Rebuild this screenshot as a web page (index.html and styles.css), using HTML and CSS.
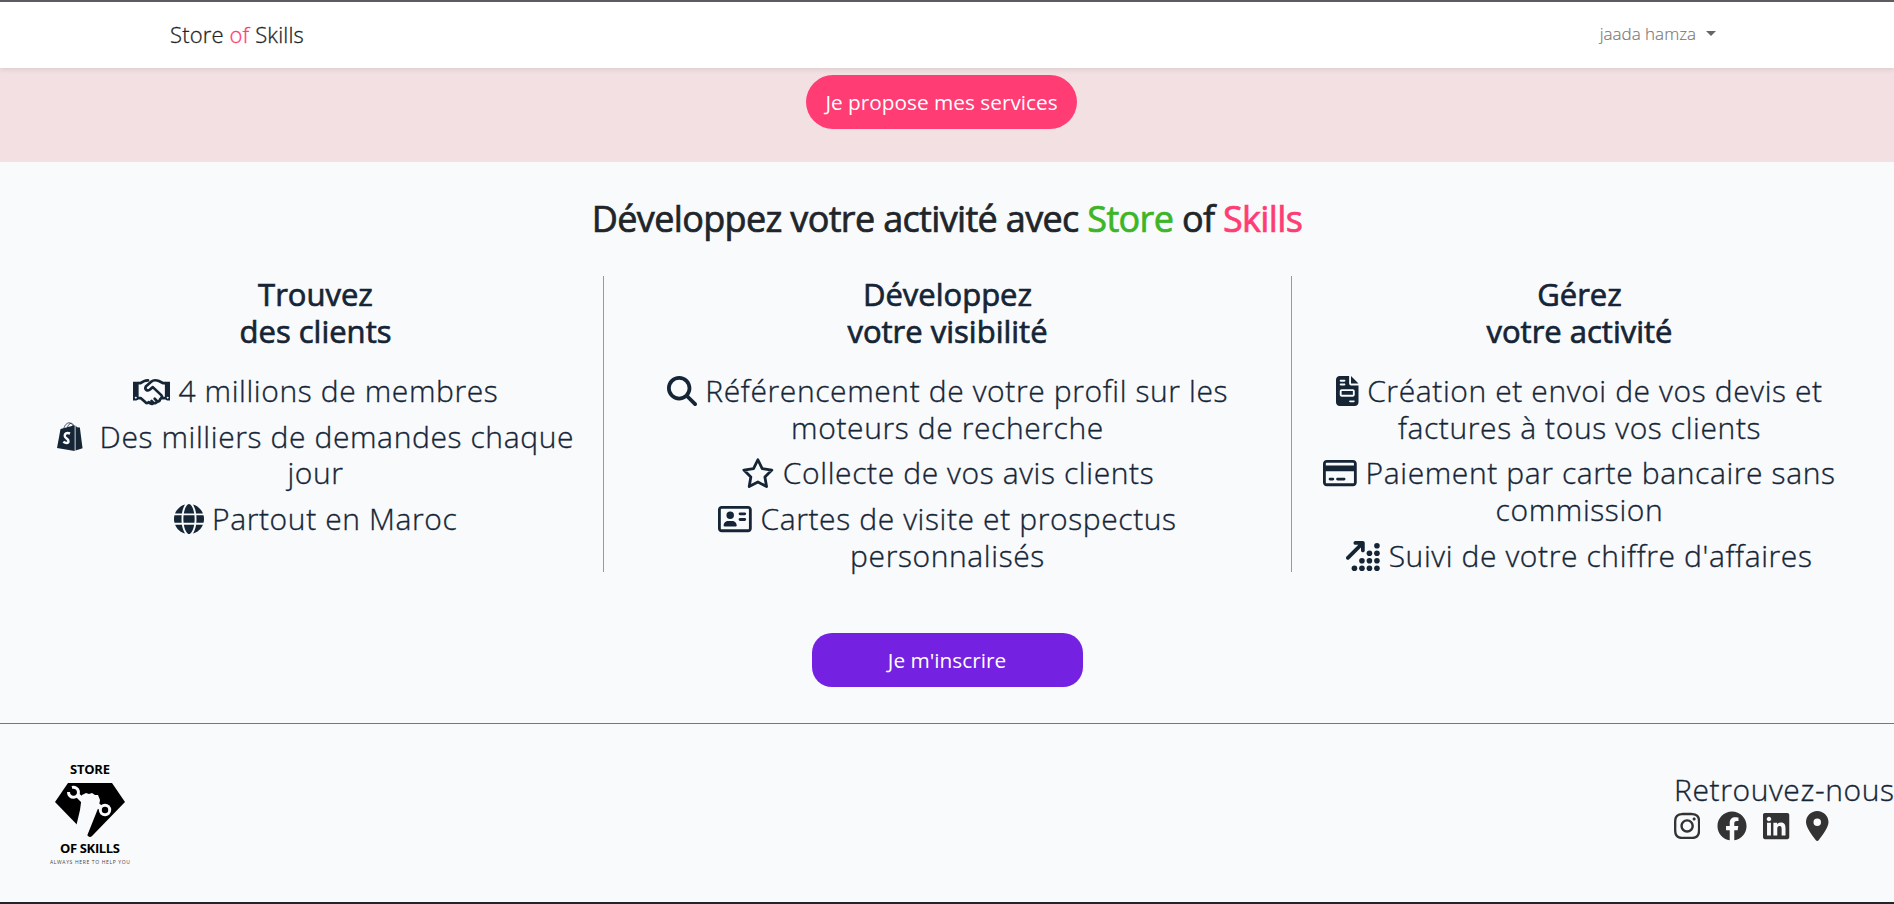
FILE: index.html
```html
<!DOCTYPE html>
<html lang="fr">
<head>
<meta charset="utf-8">
<title>Store of Skills</title>
<link rel="stylesheet" href="styles.css">
</head>
<body>
<nav class="navbar">
  <a class="brand">Store <span class="pink">of</span> Skills</a>
  <a class="user">jaada hamza<span class="caret"></span></a>
</nav>
<section class="hero"><a class="btn btn-pink">Je propose mes services</a></section>
<main class="features">
  <h2 class="title">Développez votre activité avec <span class="green">Store</span> of <span class="pink">Skills</span></h2>
  <div class="columns">
    <div class="col col-1">
      <h3>Trouvez<br>des clients</h3>
      <ul>
        <li><svg class="ic w640" viewBox="0 0 640 512"><path fill-rule="evenodd" d="M0 96h96v280a40 40 0 0 1-40 40H0zM544 96h96v320h-56a40 40 0 0 1-40-40zM48 352a16 16 0 1 0 .1 0zM592 352a16 16 0 1 0 .1 0z"/><g fill="none" stroke="currentColor" stroke-width="46" stroke-linejoin="round" stroke-linecap="round"><path d="M96 120h34l60-32c20-10 40-12 66-12M96 376h34l88 78c18 14 38 8 50-8l34 26c18 10 38 4 48-14 24 12 50 4 60-22 28 4 48-12 50-34l20-26h60M544 120h-36l-66-34c-50-20-100-16-132 12l-92 82c-24 50 24 86 66 54l54-44 140 132c18 18 22 34 12 50M350 458l-34-34M410 430l-40-42"/></g></svg> 4 millions de membres</li>
        <li><svg class="ic w448 bag" viewBox="0 0 448 512"><path d="M60 118l242-62v438L0 445zM316 58l26 30 48 6 46 356-120 36z"/><path d="M115 118C130 50 175 8 215 14c40 8 55 45 58 70M175 100C190 50 215 20 245 22c25 2 38 30 40 55" fill="none" stroke="currentColor" stroke-width="13"/><path d="M222 196c-60-22-92 6-90 42 3 44 66 48 64 92-3 38-50 34-88 8" fill="none" stroke="#f8fafc" stroke-width="42"/></svg> Des milliers de demandes chaque<br>jour</li>
        <li><svg class="ic w512" viewBox="0 0 512 512"><path d="M352 256c0 22.2-1.2 43.6-3.3 64H163.3c-2.2-20.4-3.3-41.8-3.3-64s1.2-43.6 3.3-64H348.7c2.2 20.4 3.3 41.8 3.3 64zm28.8-64H503.9c5.3 20.5 8.1 41.9 8.1 64s-2.8 43.5-8.1 64H380.8c2.1-20.6 3.2-42 3.2-64s-1.1-43.4-3.2-64zm112.6-32H376.7c-10-63.9-29.8-117.4-55.3-151.6c78.3 20.7 142 77.5 171.9 151.6zm-149.1 0H167.7c6.1-36.4 15.5-68.6 27-94.7c10.5-23.6 22.2-40.7 33.5-51.5C239.4 3.2 248.7 0 256 0s16.6 3.2 27.8 13.8c11.3 10.8 23 27.9 33.5 51.5c11.6 26 20.9 58.2 27 94.7zm-209 0H18.6C48.6 85.9 112.2 29.1 190.6 8.4C165.1 42.6 145.3 96.1 135.3 160zM8.1 192H131.2c-2.1 20.6-3.2 42-3.2 64s1.1 43.4 3.2 64H8.1C2.8 299.5 0 278.1 0 256s2.8-43.5 8.1-64zM194.7 446.6c-11.6-26-20.9-58.2-27-94.6H344.3c-6.1 36.4-15.5 68.6-27 94.6c-10.5 23.6-22.2 40.7-33.5 51.5C272.6 508.8 263.3 512 256 512s-16.6-3.2-27.8-13.8c-11.3-10.8-23-27.9-33.5-51.5zM135.3 352c10 63.9 29.8 117.4 55.3 151.6C112.2 482.9 48.6 426.1 18.6 352H135.3zm358.1 0c-30 74.1-93.6 130.9-171.9 151.6c25.5-34.2 45.2-87.7 55.3-151.6H493.4z"/></svg> Partout en Maroc</li>
      </ul>
    </div>
    <div class="col col-2">
      <h3>Développez<br>votre visibilité</h3>
      <ul>
        <li><svg class="ic w512" viewBox="0 0 512 512"><path d="M416 208c0 45.9-14.9 88.3-40 122.7L502.6 457.4c12.5 12.5 12.5 32.8 0 45.3s-32.8 12.5-45.3 0L330.7 376c-34.4 25.2-76.8 40-122.7 40C93.1 416 0 322.9 0 208S93.1 0 208 0S416 93.1 416 208zM208 352a144 144 0 1 0 0-288 144 144 0 1 0 0 288z"/></svg> Référencement de votre profil sur les<br>moteurs de recherche</li>
        <li><svg class="ic w576" viewBox="0 0 576 512"><path d="M288 30L362 182 527 206 408 324 436 488 288 410 140 488 168 324 49 206 214 182Z" fill="none" stroke="currentColor" stroke-width="48" stroke-linejoin="round"/></svg> Collecte de vos avis clients</li>
        <li><svg class="ic w576" viewBox="0 0 576 512"><path d="M512 80c8.8 0 16 7.2 16 16V416c0 8.8-7.2 16-16 16H64c-8.8 0-16-7.2-16-16V96c0-8.8 7.2-16 16-16H512zM64 32C28.7 32 0 60.7 0 96V416c0 35.3 28.7 64 64 64H512c35.3 0 64-28.7 64-64V96c0-35.3-28.7-64-64-64H64zM208 256a64 64 0 1 0 0-128 64 64 0 1 0 0 128zm-32 32c-44.2 0-80 35.8-80 80c0 8.8 7.2 16 16 16H304c8.8 0 16-7.2 16-16c0-44.2-35.8-80-80-80H176zM376 144c-13.3 0-24 10.7-24 24s10.7 24 24 24h80c13.3 0 24-10.7 24-24s-10.7-24-24-24H376zm0 96c-13.3 0-24 10.7-24 24s10.7 24 24 24h80c13.3 0 24-10.7 24-24s-10.7-24-24-24H376z"/></svg> Cartes de visite et prospectus<br>personnalisés</li>
      </ul>
    </div>
    <div class="col col-3">
      <h3>Gérez<br>votre activité</h3>
      <ul>
        <li><svg class="ic w384" viewBox="0 0 384 512"><path d="M64 0C28.7 0 0 28.7 0 64V448c0 35.3 28.7 64 64 64H320c35.3 0 64-28.7 64-64V160H256c-17.7 0-32-14.3-32-32V0H64zM256 0V128H384L256 0zM80 64h64c8.8 0 16 7.2 16 16s-7.2 16-16 16H80c-8.8 0-16-7.2-16-16s7.2-16 16-16zm0 64h64c8.8 0 16 7.2 16 16s-7.2 16-16 16H80c-8.8 0-16-7.2-16-16s7.2-16 16-16zm16 96H288c17.7 0 32 14.3 32 32v64c0 17.7-14.3 32-32 32H96c-17.7 0-32-14.3-32-32V256c0-17.7 14.3-32 32-32zm0 32v64H288V256H96zM240 416h64c8.8 0 16 7.2 16 16s-7.2 16-16 16H240c-8.8 0-16-7.2-16-16s7.2-16 16-16z" fill-rule="evenodd"/></svg> Création et envoi de vos devis et<br>factures à tous vos clients</li>
        <li><svg class="ic w576" viewBox="0 0 576 512"><path d="M512 80c8.8 0 16 7.2 16 16v32H48V96c0-8.8 7.2-16 16-16H512zm16 144V416c0 8.8-7.2 16-16 16H64c-8.8 0-16-7.2-16-16V224H528zM64 32C28.7 32 0 60.7 0 96V416c0 35.3 28.7 64 64 64H512c35.3 0 64-28.7 64-64V96c0-35.3-28.7-64-64-64H64zm56 304c-13.3 0-24 10.7-24 24s10.7 24 24 24h48c13.3 0 24-10.7 24-24s-10.7-24-24-24H120zm128 0c-13.3 0-24 10.7-24 24s10.7 24 24 24H360c13.3 0 24-10.7 24-24s-10.7-24-24-24H248z"/></svg> Paiement par carte bancaire sans<br>commission</li>
        <li><svg class="ic w576" viewBox="0 0 576 512"><path d="M160 0c-17.7 0-32 14.3-32 32s14.3 32 32 32h50.7L9.4 265.4c-12.5 12.5-12.5 32.8 0 45.3s32.8 12.5 45.3 0L256 109.3V160c0 17.7 14.3 32 32 32s32-14.3 32-32V32c0-17.7-14.3-32-32-32H160z"/><circle cx="528" cy="80" r="48"/><circle cx="400" cy="208" r="48"/><circle cx="528" cy="208" r="48"/><circle cx="272" cy="336" r="48"/><circle cx="400" cy="336" r="48"/><circle cx="528" cy="336" r="48"/><circle cx="144" cy="464" r="48"/><circle cx="272" cy="464" r="48"/><circle cx="400" cy="464" r="48"/><circle cx="528" cy="464" r="48"/></svg> Suivi de votre chiffre d'affaires</li>
      </ul>
    </div>
  </div>
  <a class="btn btn-purple">Je m'inscrire</a>
</main>
<footer class="footer">
  <svg class="logo" viewBox="0 0 90 108">
    <text x="45" y="14" class="lg" textLength="40">STORE</text>
    <path d="M23 23H67L80 42 47 76Q45 78 43 76L10 42Z"/>
    <g fill="#f8fafc"><path d="M37 35l4-2 3 1 3-1 3 2 3 0 2 5-1 6-2 5-10 25-11-9 4-17z"/><path d="M33 33l7 5-3 5-6-6zM53 43l5 3-2 5-4-3z"/><circle cx="60" cy="50" r="6.2"/></g>
    <circle cx="60" cy="50" r="3.2"/>
    <path d="M27 27.500A5 5 0 1 1 23.500 32" fill="none" stroke="#f8fafc" stroke-width="3"/>
    <text x="45" y="93" class="lg" textLength="60">OF SKILLS</text>
    <text x="45" y="104" class="ls" textLength="80">ALWAYS HERE TO HELP YOU</text>
  </svg>
  <div class="social">
    <p>Retrouvez-nous</p>
    <div class="icons">
      <svg class="w448" viewBox="0 0 448 512"><path d="M224.1 141c-63.6 0-114.9 51.3-114.9 114.9s51.3 114.9 114.9 114.9S339 319.5 339 255.9 287.7 141 224.1 141zm0 189.6c-41.1 0-74.7-33.5-74.7-74.7s33.5-74.7 74.7-74.7 74.7 33.5 74.7 74.7-33.6 74.7-74.7 74.7zm146.4-194.3c0 14.9-12 26.8-26.8 26.8-14.9 0-26.8-12-26.8-26.8s12-26.8 26.8-26.8 26.8 12 26.8 26.8zm76.1 27.2c-1.7-35.9-9.9-67.7-36.2-93.9-26.2-26.2-58-34.4-93.9-36.2-37-2.1-147.9-2.1-184.9 0-35.8 1.7-67.6 9.9-93.9 36.1s-34.4 58-36.2 93.9c-2.1 37-2.1 147.9 0 184.9 1.7 35.9 9.9 67.7 36.2 93.9s58 34.4 93.9 36.2c37 2.1 147.9 2.1 184.9 0 35.9-1.7 67.7-9.9 93.9-36.2 26.2-26.2 34.4-58 36.2-93.9 2.1-37 2.1-147.8 0-184.8zM398.8 388c-7.8 19.6-22.9 34.7-42.6 42.6-29.5 11.7-99.5 9-132.1 9s-102.7 2.6-132.1-9c-19.6-7.8-34.7-22.9-42.6-42.6-11.7-29.5-9-99.5-9-132.1s-2.6-102.7 9-132.1c7.8-19.6 22.9-34.7 42.6-42.6 29.5-11.7 99.5-9 132.1-9s102.7-2.6 132.1 9c19.6 7.8 34.7 22.9 42.6 42.6 11.7 29.5 9 99.5 9 132.1s2.7 102.7-9 132.1z"/></svg>
      <svg class="w512" viewBox="0 0 512 512"><path d="M504 256C504 119 393 8 256 8S8 119 8 256c0 123.78 90.69 226.38 209.25 245V327.69h-63V256h63v-54.64c0-62.15 37-96.48 93.67-96.48 27.14 0 55.52 4.84 55.52 4.84v61h-31.28c-30.8 0-40.41 19.12-40.41 38.73V256h68.78l-11 71.69h-57.78V501C413.31 482.38 504 379.78 504 256z"/></svg>
      <svg class="w448" viewBox="0 0 448 512"><path d="M416 32H31.9C14.3 32 0 46.5 0 64.3v383.4C0 465.5 14.3 480 31.9 480H416c17.6 0 32-14.5 32-32.3V64.3c0-17.8-14.4-32.3-32-32.3zM135.4 416H69V202.2h66.5V416zm-33.2-243c-21.3 0-38.5-17.3-38.5-38.5S80.9 96 102.2 96c21.2 0 38.5 17.3 38.5 38.5 0 21.3-17.2 38.5-38.5 38.5zm282.1 243h-66.4V312c0-24.8-.5-56.7-34.5-56.7-34.6 0-39.9 27-39.9 54.9V416h-66.4V202.2h63.7v29.2h.9c8.9-16.8 30.6-34.5 62.9-34.5 67.2 0 79.7 44.3 79.7 101.9V416z"/></svg>
      <svg class="w384" viewBox="0 0 384 512"><path d="M215.7 499.2C267 435 384 279.4 384 192C384 86 298 0 192 0S0 86 0 192c0 87.4 117 243 168.3 307.2c12.3 15.3 35.1 15.3 47.4 0zM192 128a64 64 0 1 1 0 128 64 64 0 1 1 0-128z"/></svg>
    </div>
  </div>
</footer>
</body>
</html>
```
FILE: styles.css
```css
* { box-sizing: border-box; }
body { margin: 0; height: 904px; overflow: hidden; background: #f8fafc; color: #212529; font-family: "Open Sans", sans-serif; border-top: 2px solid #5f5b62; border-bottom: 2px solid #212529; display: flex; flex-direction: column; }
.navbar { height: 66px; flex: none; background: #fff; display: flex; justify-content: space-between; align-items: center; padding: 0 178px 3px 170px; box-shadow: 0 2px 5px rgba(0,0,0,.09); position: relative; z-index: 1; }
.brand { font-size: 22px; font-weight: 300; color: #212529; letter-spacing: .15px; -webkit-text-stroke: .3px currentColor; }
.pink { color: #ff3c74; }
.green { color: #3cb527; }
.user { font-size: 17px; font-weight: 300; color: #777; display: flex; align-items: center; -webkit-text-stroke: .15px currentColor; }
.caret { border: 5px solid transparent; border-top-color: #666; border-bottom: 0; margin: 0 0 1px 10px; }
.hero { height: 94px; flex: none; background: #f3e0e3; padding: 7px 0 0 806px; }
.btn { display: flex; align-items: center; justify-content: center; width: 271px; height: 54px; color: #fff; font-size: 20.8px; }
.btn-pink { background: #ff3c74; border-radius: 27px; }
.btn-purple { background: #7421e2; border-radius: 20px; align-self: center; margin-top: 61px; }
.features { height: 562px; flex: none; display: flex; flex-direction: column; padding-top: 35px; border-bottom: 1px solid #777; }
.title { margin: 0; text-align: center; font-size: 36px; font-weight: 400; line-height: 43px; letter-spacing: -.66px; -webkit-text-stroke: .7px currentColor; }
.columns { display: grid; grid-template: 296px / 604px 688px 1fr; margin-top: 36px; color: #152536; }
.col { text-align: center; border-right: 1px solid #999; }
.col-1 { padding-left: 28px; }
.col-3 { border: 0; padding-right: 27px; }
h3 { margin: 0 0 23px; font-size: 31px; line-height: 37px; font-weight: 400; -webkit-text-stroke: .7px currentColor; }
ul { list-style: none; margin: 0; padding: 0; }
li { font-size: 30px; font-weight: 300; letter-spacing: .61px; -webkit-text-stroke: .35px currentColor; line-height: 36.7px; margin-bottom: 9px; white-space: nowrap; }
.ic { height: 30px; fill: currentColor; vertical-align: -4px; }
.w384 { width: 22.5px; }
.w448 { width: 26.25px; }
.w512 { width: 30px; }
.w576 { width: 33.75px; }
.w640 { width: 37.5px; }
.bag { margin-right: 8px; }
.footer { flex: 1; display: flex; justify-content: space-between; padding: 36px 0 0 45px; }
.logo { width: 90px; height: 108px; }
.lg { font: 700 13px "Open Sans", sans-serif; text-anchor: middle; }
.ls { font: 5px "Open Sans", sans-serif; text-anchor: middle; fill: #444; }
.social { width: 220px; padding-top: 11px; }
.social p { margin: 0; font-size: 30px; line-height: 37px; font-weight: 300; letter-spacing: .61px; -webkit-text-stroke: .35px currentColor; color: #152536; white-space: nowrap; }
.icons { display: flex; gap: 16.5px; margin-top: 3px; }
.icons svg { height: 30px; fill: #333; }
```
